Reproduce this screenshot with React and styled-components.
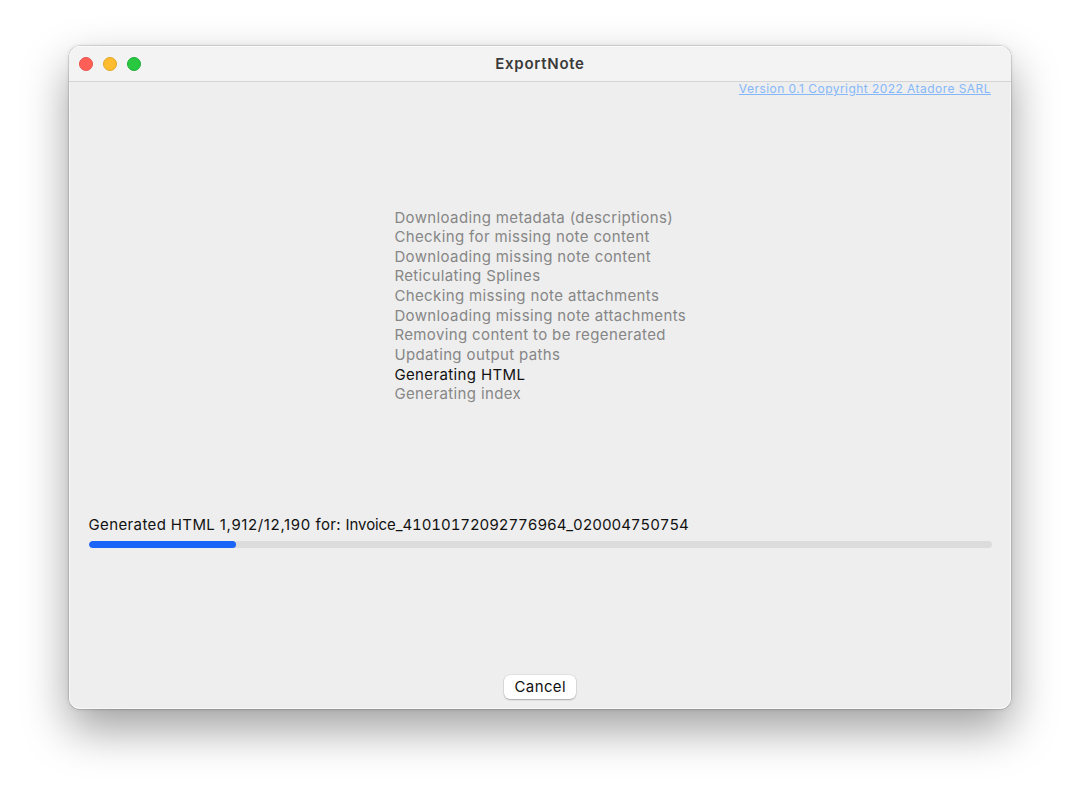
import React from "react";
import styled, { createGlobalStyle } from "styled-components";

const Global = createGlobalStyle`
  html, body { margin: 0; padding: 0; background: #fff; }
  body { font-family: Inter, "Noto Sans", "Liberation Sans", sans-serif; -webkit-font-smoothing: antialiased; }
`;

const Page = styled.div`
  width: 1080px;
  height: 800px;
  padding: 46px 69px 91px;
  box-sizing: border-box;
  overflow: hidden;
`;

const Window = styled.div`
  height: 663px;
  display: flex;
  flex-direction: column;
  background: #eeeeee;
  border-radius: 11px;
  box-shadow: 0 0 0 0.5px rgba(0, 0, 0, 0.2), inset 0 0 0 1px rgba(255, 255, 255, 0.6),
    0 0 4px rgba(0, 0, 0, 0.12), 0 20px 46px rgba(0, 0, 0, 0.38);
  overflow: hidden;
`;

const TitleBar = styled.header`
  height: 36px;
  flex: none;
  display: grid;
  grid-template-columns: 1fr auto 1fr;
  align-items: center;
  padding: 0 10px;
  background: #f3f3f3;
  border-top: 1px solid #fbfbfb;
  border-bottom: 1px solid #d4d4d4;
  box-sizing: border-box;
`;

const Lights = styled.div`
  display: flex;
  gap: 10px;
`;

const Light = styled.span`
  width: 14px;
  height: 14px;
  box-sizing: border-box;
  border-radius: 50%;
  background: ${(p) => p.$fill};
  border: 0.5px solid ${(p) => p.$edge};
`;

const Title = styled.h1`
  margin: -2px 0 0;
  font-size: 15px;
  font-weight: 600;
  color: #3a3a3a;
  letter-spacing: 0.72px;
`;

const Content = styled.main`
  flex: 1;
  display: flex;
  flex-direction: column;
  padding: 0 19px 10px 19.5px;
  min-height: 0;
`;

const VersionLink = styled.a`
  align-self: flex-end;
  margin-right: 1px;
  font-size: 12px;
  line-height: 14px;
  font-weight: 400;
  color: #85b8fa;
  text-decoration: underline;
  letter-spacing: 0.45px;
`;

const Steps = styled.ul`
  list-style: none;
  margin: 111.5px 0 0;
  padding: 0;
  align-self: center;
  font-size: 15px;
  line-height: 19.65px;
  letter-spacing: 0.37px;
`;

const Step = styled.li`
  color: ${(p) => (p.$active ? "#111" : "#868686")};
  white-space: nowrap;
`;

const Status = styled.div`
  margin-top: 110.5px;
  font-size: 15px;
  line-height: 20px;
  color: #111;
  white-space: nowrap;
  letter-spacing: 0.38px;
`;

const Counts = styled.span`
  letter-spacing: 0.63px;
`;

const FileName = styled.span`
  font-variant-numeric: tabular-nums;
  letter-spacing: -0.09px;
`;

const Track = styled.div`
  height: 7px;
  margin-top: 6px;
  border-radius: 4px;
  background: #dcdcdc;
  overflow: hidden;
`;

const Fill = styled.div`
  height: 100%;
  background: #1a64f8;
  border-radius: 4px;
`;

const Footer = styled.div`
  margin-top: auto;
  display: flex;
  justify-content: center;
`;

const CancelButton = styled.button`
  width: 72px;
  height: 24px;
  padding: 0 0 2px;
  border: 0;
  border-radius: 6px;
  background: #fff;
  color: #111;
  font: inherit;
  font-size: 15px;
  letter-spacing: 0.38px;
  box-shadow: 0 0 0 0.5px rgba(0, 0, 0, 0.1), 0 1px 1.5px rgba(0, 0, 0, 0.25);
`;

const steps = [
  "Downloading metadata (descriptions)",
  "Checking for missing note content",
  "Downloading missing note content",
  "Reticulating Splines",
  "Checking missing note attachments",
  "Downloading missing note attachments",
  "Removing content to be regenerated",
  "Updating output paths",
  "Generating HTML",
  "Generating index",
];

export default function App() {
  return (
    <Page>
      <Global />
      <Window>
        <TitleBar>
          <Lights>
            <Light $fill="#ff5f57" $edge="#e5534b" />
            <Light $fill="#febc2e" $edge="#e0a528" />
            <Light $fill="#28c840" $edge="#1fad33" />
          </Lights>
          <Title>ExportNote</Title>
        </TitleBar>
        <Content>
          <VersionLink>Version 0.1 Copyright 2022 Atadore SARL</VersionLink>
          <Steps>
            {steps.map((s) => (
              <Step key={s} $active={s === "Generating HTML"}>{s}</Step>
            ))}
          </Steps>
          <Status>
            Generated HTML <Counts>1,912/12,190</Counts> for: <FileName>Invoice_41010172092776964_020004750754</FileName>
          </Status>
          <Track>
            <Fill style={{ width: "16.3%" }} />
          </Track>
          <Footer>
            <CancelButton>Cancel</CancelButton>
          </Footer>
        </Content>
      </Window>
    </Page>
  );
}
